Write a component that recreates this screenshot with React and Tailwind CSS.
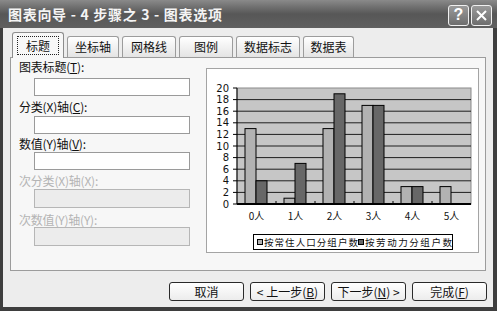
import React from "react";

const CJK = { fontFamily: '"Noto Sans CJK SC", "Noto Sans", sans-serif' };

const data = [
  [13, 4],
  [1, 7],
  [13, 19],
  [17, 17],
  [3, 3],
  [3, 0],
];

function Chart() {
  const L = 30, T = 19, R = 264, B = 135;
  const u = (B - T) / 20;
  const cw = (R - L) / 6;
  const grid = [2, 4, 6, 8, 10, 12, 14, 16, 18];
  return (
    <svg width="271" height="183" viewBox="0 0 271 183" style={CJK}>
      <rect x={L} y={T} width={R - L} height={B - T} fill="#c6c6c6" stroke="#8a8a8a" strokeWidth="1" />
      {grid.map((g) => (
        <line key={g} x1={L} x2={R} y1={B - g * u} y2={B - g * u} stroke="#1e1e1e" strokeWidth="1" />
      ))}
      {[0, 2, 4, 6, 8, 10, 12, 14, 16, 18, 20].map((g) => (
        <g key={"t" + g}>
          <line x1={L - 4} x2={L} y1={B - g * u} y2={B - g * u} stroke="#000" strokeWidth="1" />
          <text x={22} y={B - g * u + 3.5} fontSize="10" textAnchor="end" fill="#111" style={{ fontFamily: '"DejaVu Sans", sans-serif' }}>
            {g}
          </text>
        </g>
      ))}
      {data.map((d, i) => {
        const x0 = L + i * cw + 8;
        return (
          <g key={i}>
            {d[0] > 0 && (
              <rect x={x0} y={B - d[0] * u} width={11} height={d[0] * u} fill="#b2b2b2" stroke="#000" strokeWidth="1" />
            )}
            {d[1] > 0 && (
              <rect x={x0 + 11} y={B - d[1] * u} width={11} height={d[1] * u} fill="#676767" stroke="#000" strokeWidth="1" />
            )}
          </g>
        );
      })}
      {[1, 2, 3, 4, 5].map((i) => (
        <line key={"x" + i} x1={L + i * cw} x2={L + i * cw} y1={B - 3} y2={B} stroke="#000" strokeWidth="1" />
      ))}
      <line x1={L} x2={L} y1={T} y2={B} stroke="#000" strokeWidth="1" />
      <line x1={L} x2={R} y1={B} y2={B} stroke="#000" strokeWidth="2" />
      {data.map((d, i) => (
        <text key={"c" + i} x={L + i * cw + cw / 2} y={151} fontSize="10" textAnchor="middle" fill="#111">
          {i}人
        </text>
      ))}
      <rect x={46.5} y={165.5} width={199} height={15} fill="#fff" stroke="#000" strokeWidth="1" />
      <rect x={50.5} y={170.5} width={5} height={5} fill="#b2b2b2" stroke="#000" strokeWidth="1" />
      <text x={57} y={177} fontSize="9.5" fill="#111" textLength="94" lengthAdjust="spacing">按常住人口分组户数</text>
      <rect x={151.5} y={170.5} width={5} height={5} fill="#676767" stroke="#000" strokeWidth="1" />
      <text x={158} y={177} fontSize="9.5" fill="#111" textLength="87" lengthAdjust="spacing">按劳动力分组户数</text>
    </svg>
  );
}

function Tab({ label, w, selected }) {
  if (selected) {
    return (
      <div
        className={`relative z-10 -mb-px h-[26px] ${w} flex items-center justify-center rounded-t-[3px] border border-b-0 border-[#8c8c8c] bg-[#f7f7f7]`}
      >
        <span className="border border-dotted border-[#222] px-[8px] leading-[17px] text-[12px] text-[#111]">{label}</span>
      </div>
    );
  }
  return (
    <div
      className={`h-[21px] ${w} flex items-center justify-center rounded-t-[3px] border border-b-0 border-[#9c9c9c] bg-linear-to-b from-white to-[#e4e4e4] text-[12px] text-[#111]`}
    >
      {label}
    </div>
  );
}

function Label({ children, disabled, className }) {
  return (
    <div className={`text-[12px] leading-[14px] whitespace-nowrap tracking-[-0.2px] ${disabled ? "text-[#b4b4b4]" : "text-[#111]"} ${className}`}>
      {children}
    </div>
  );
}

function Input({ disabled, className }) {
  return (
    <div
      className={`ml-[15px] w-[156px] border ${disabled ? "border-[#b6b6b6] bg-[#ececec]" : "border-[#9a9a9a] bg-white"} ${className}`}
    />
  );
}

function Btn({ children }) {
  return (
    <div className="w-[75px] h-[19px] flex items-center justify-center rounded-[3px] border border-[#2a2a2a] bg-linear-to-b from-white to-[#ececec] text-[12px] text-[#111] whitespace-nowrap">
      {children}
    </div>
  );
}

export default function App() {
  return (
    <div className="w-[497px] h-[311px] flex flex-col overflow-hidden bg-[#3e3e3e]" style={CJK}>
      <div className="h-[28px] shrink-0 flex items-center justify-between pl-[8px] pr-[5px] bg-linear-to-b from-[#8a8a8a] via-[#575757] to-[#606060]">
        <div className="text-[14px] font-bold text-[#f4f4f4] whitespace-pre tracking-[0.7px]">图表向导 - 4 步骤之 3 - 图表选项</div>
        <div className="flex gap-[2px] mt-[2px]">
          <div className="w-[21px] h-[21px] rounded-[3px] border border-[#f0f0f0] bg-linear-to-b from-[#9a9a9a] to-[#6e6e6e] flex items-center justify-center text-[16px] font-bold text-white leading-none" style={{ fontFamily: '"Liberation Sans", sans-serif' }}>
            ?
          </div>
          <div className="w-[21px] h-[21px] rounded-[3px] border border-[#f0f0f0] bg-linear-to-b from-[#9a9a9a] to-[#6e6e6e] flex items-center justify-center">
            <svg width="11" height="11" viewBox="0 0 11 11">
              <path d="M1 1 L10 10 M10 1 L1 10" stroke="#fff" strokeWidth="2" />
            </svg>
          </div>
        </div>
      </div>
      <div className="flex-1 ml-[3px] mr-[4px] mb-[4px] bg-[#ededed] flex flex-col">
        <div className="h-[29px] shrink-0 flex items-end pl-[9px] gap-[3px]">
          <Tab label="标题" w="w-[52px]" selected />
          <Tab label="坐标轴" w="w-[52px]" />
          <Tab label="网格线" w="w-[54px]" />
          <Tab label="图例" w="w-[54px]" />
          <Tab label="数据标志" w="w-[64px]" />
          <Tab label="数据表" w="w-[51px]" />
        </div>
        <div className="h-[214px] shrink-0 mx-[7px] border border-[#9c9c9c] bg-[#f7f7f7] flex items-start pl-[8px]">
          <div className="flex flex-col w-[171px] pt-[2px]">
            <Label>图表标题(<u>T</u>):</Label>
            <Input className="mt-[4px] h-[18px]" />
            <Label className="mt-[4px]">分类(X)轴(<u>C</u>):</Label>
            <Input className="mt-[2px] h-[18px]" />
            <Label className="mt-[3px]">数值(Y)轴(<u>V</u>):</Label>
            <Input className="mt-[1px] h-[18px]" />
            <Label disabled className="mt-[4px]">次分类(X)轴(X):</Label>
            <Input disabled className="mt-[1px] h-[19px]" />
            <Label disabled className="mt-[5px]">次数值(Y)轴(Y):</Label>
            <Input disabled className="mt-0 h-[19px]" />
          </div>
          <div className="ml-[16px] mt-[10px] w-[273px] h-[185px] border border-[#a4a4a4] bg-white">
            <Chart />
          </div>
        </div>
        <div className="flex-1 flex justify-end items-start pt-[11px] pr-[6px] gap-[6px]">
          <Btn>取消</Btn>
          <Btn>&lt; 上一步(<u>B</u>)</Btn>
          <Btn>下一步(<u>N</u>) &gt;</Btn>
          <Btn>完成(<u>F</u>)</Btn>
        </div>
      </div>
    </div>
  );
}
